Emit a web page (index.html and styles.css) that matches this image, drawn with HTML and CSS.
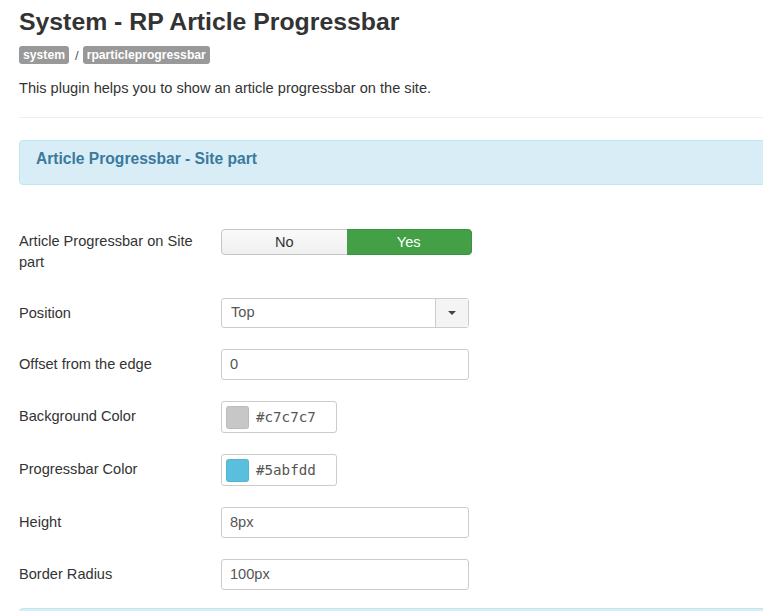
FILE: index.html
```html
<!DOCTYPE html>
<html>
<head>
<meta charset="utf-8">
<link rel="stylesheet" href="styles.css">
</head>
<body>
<div class="page">
  <h1 class="title">System - RP Article Progressbar</h1>
  <div class="badges">
    <span class="badge">system</span>
    <span class="sep">/</span>
    <span class="badge">rparticleprogressbar</span>
  </div>
  <p class="desc">This plugin helps you to show an article progressbar on the site.</p>
  <hr class="rule">
  <div class="alert"><h4 class="alert-title">Article Progressbar - Site part</h4></div>

  <div class="form">
    <div class="row row-first">
      <label class="label">Article Progressbar on Site part</label>
      <div class="toggle">
        <span class="opt opt-no">No</span>
        <span class="opt opt-yes">Yes</span>
      </div>
    </div>
    <div class="row">
      <label class="label">Position</label>
      <div class="select">
        <span class="select-value">Top</span>
        <span class="select-arrow"><span class="caret"></span></span>
      </div>
    </div>
    <div class="row">
      <label class="label">Offset from the edge</label>
      <div class="input">0</div>
    </div>
    <div class="row">
      <label class="label">Background Color</label>
      <div class="color"><span class="swatch swatch-grey"></span><span class="hex">#c7c7c7</span></div>
    </div>
    <div class="row">
      <label class="label">Progressbar Color</label>
      <div class="color"><span class="swatch swatch-blue"></span><span class="hex">#5abfdd</span></div>
    </div>
    <div class="row">
      <label class="label">Height</label>
      <div class="input">8px</div>
    </div>
    <div class="row">
      <label class="label">Border Radius</label>
      <div class="input">100px</div>
    </div>
  </div>
  <div class="alert alert-next"></div>
</div>
</body>
</html>
```

FILE: styles.css
```css
html, body {
  margin: 0;
  padding: 0;
  background: #fff;
  overflow: hidden;
}
body {
  font-family: "Liberation Sans", Arial, sans-serif;
  color: #333;
  font-size: 14.6px;
}
.page {
  padding: 0 0 0 19px;
  width: 800px;
}
.title {
  margin: 0;
  padding-top: 6px;
  font-size: 24.8px;
  line-height: 32px;
  font-weight: bold;
  color: #333;
}
.badges {
  display: flex;
  align-items: center;
  margin-top: 8px;
  height: 18px;
}
.badge {
  background: #999;
  color: #fff;
  font-weight: bold;
  font-size: 12.2px;
  line-height: 18px;
  padding: 0 4px;
  border-radius: 3px;
}
.sep {
  margin: 0 4px 0 6px;
  color: #555;
  font-size: 13px;
}
.desc {
  margin: 14px 0 0;
  line-height: 20px;
  font-size: 14.6px;
}
.rule {
  margin: 19px 0 0;
  border: 0;
  border-top: 1px solid #eee;
}
.alert {
  margin-top: 22px;
  background: #d9edf7;
  border: 1px solid #bce8f1;
  border-radius: 4px;
  height: 43px;
  padding: 0 16px;
}
.alert-title {
  margin: 0;
  padding-top: 9px;
  font-size: 15.6px;
  line-height: 18px;
  color: #3a7a9c;
  font-weight: bold;
}
.form {
  margin-top: 44px;
}
.row {
  display: flex;
  align-items: flex-start;
  margin-bottom: 21px;
}
.row:last-child {
  margin-bottom: 18px;
}
.row-first {
  min-height: 48px;
}
.label {
  width: 202px;
  flex: none;
  line-height: 21px;
  padding-right: 16px;
  box-sizing: border-box;
}
.row .label { padding-top: 5px; }
.row-first .label { padding-top: 2px; }
.toggle {
  display: flex;
  width: 251px;
  height: 26px;
  border-radius: 4px;
  overflow: hidden;
  box-sizing: border-box;
}
.opt {
  flex: 1;
  text-align: center;
  line-height: 24px;
  font-size: 14.6px;
  box-sizing: border-box;
}
.opt-no {
  background: linear-gradient(#fafafa, #efefef);
  border: 1px solid #c5c5c5;
  border-right: 0;
  border-radius: 4px 0 0 4px;
  color: #333;
}
.opt-yes {
  background: #43a047;
  border: 1px solid #3d9142;
  border-left: 0;
  border-radius: 0 4px 4px 0;
  color: #fff;
}
.select {
  display: flex;
  width: 248px;
  height: 30px;
  border: 1px solid #ccc;
  border-radius: 3px;
  box-sizing: border-box;
}
.select-value {
  flex: 1;
  line-height: 27px;
  padding-left: 9px;
  color: #555;
}
.select-arrow {
  width: 32px;
  border-left: 1px solid #ccc;
  background: #f4f4f4;
  display: flex;
  align-items: center;
  justify-content: center;
}
.caret {
  width: 0;
  height: 0;
  border-left: 4px solid transparent;
  border-right: 4px solid transparent;
  border-top: 4px solid #444;
}
.input {
  width: 248px;
  height: 31px;
  border: 1px solid #ccc;
  border-radius: 3px;
  box-sizing: border-box;
  line-height: 29px;
  padding-left: 8px;
  color: #555;
}
.color {
  display: flex;
  align-items: center;
  width: 116px;
  height: 32px;
  border: 1px solid #ccc;
  border-radius: 3px;
  box-sizing: border-box;
  padding-left: 4px;
}
.swatch {
  width: 23px;
  height: 23px;
  border-radius: 3px;
  box-sizing: border-box;
  border: 1px solid rgba(0,0,0,0.05);
}
.swatch-grey { background: #c7c7c7; }
.swatch-blue { background: #5abfdd; }
.hex {
  margin-left: 7px;
  font-family: "DejaVu Sans Mono", monospace;
  font-size: 14.2px;
  color: #555;
}
.alert-next {
  margin-top: 0;
  height: 20px;
}
```
